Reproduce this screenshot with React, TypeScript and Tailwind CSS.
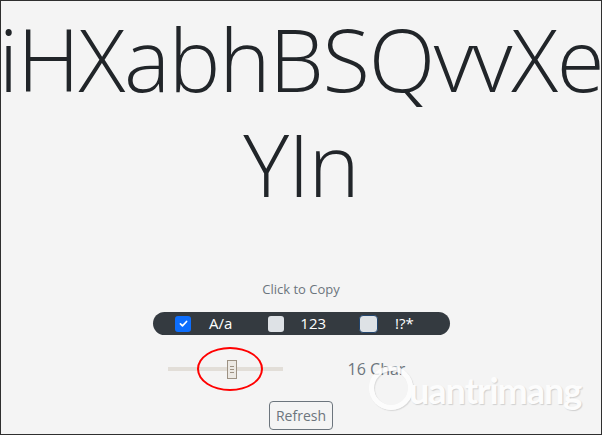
import React from "react"

const Check = () => (
    <svg viewBox="0 0 16 16" className="w-[11px] h-[11px]" fill="none">
        <path d="M3.5 8.5l3 3 6-6.5" stroke="white" strokeWidth="2.4" strokeLinecap="round" strokeLinejoin="round" />
    </svg>
)

export default function App() {
    return (
        <div className="w-[602px] h-[435px] bg-[#f4f4f4] border border-[#2f2f2f] overflow-hidden relative font-['Open_Sans',sans-serif]">
            <div className="flex flex-col items-center">
                <div className="w-full pt-[5px] text-[#212529] font-light text-[87px] leading-[105px] text-center whitespace-nowrap flex flex-col items-center">
                    <span className="tracking-[-1.3px]">iHXabhBSQvvXe</span>
                    <span className="tracking-[-1.3px]">YIn</span>
                </div>

                <p className="mt-[63px] text-[13px] leading-[20px] text-[#6c757d]">Click to Copy</p>

                <div className="mt-[13px] ml-[1px] w-[297px] h-[23px] rounded-full bg-[#343a40] flex items-center pl-[22px] text-white text-[15px]">
                    <span className="w-[16px] h-[16px] rounded-[3px] bg-[#0d6efd] flex items-center justify-center">
                        <Check />
                    </span>
                    <span className="ml-[18px] leading-none">A/a</span>
                    <span className="ml-[36px] w-[16px] h-[16px] rounded-[3px] bg-[#dee2e6]" />
                    <span className="ml-[16px] leading-none">123</span>
                    <span className="ml-[33px] w-[19px] h-[18px] rounded-[4px] bg-[#dee2e6] border border-[#23466f]" />
                    <span className="ml-[17px] leading-none">!?*</span>
                </div>

                <div className="mt-[19px] h-[30px] flex items-center">
                    <div className="relative w-[115px] h-[4px] bg-[#e2ded8] ml-[-29px]">
                        <span className="absolute left-[59px] top-[-7px] w-[10px] h-[19px] bg-[#ece9e4] border border-[#9d9284] flex flex-col items-center justify-center gap-[2px]">
                            <span className="w-[4px] h-px bg-[#9d9284]" />
                            <span className="w-[4px] h-px bg-[#9d9284]" />
                            <span className="w-[4px] h-px bg-[#9d9284]" />
                        </span>
                        <span className="absolute left-[29px] top-[-20px] w-[66px] h-[44px] rounded-[50%] border-2 border-[#ff0000]" />
                    </div>
                    <span className="ml-[65px] text-[16px] text-[#6c757d]">16 Char</span>
                </div>

                <button className="mt-[17px] w-[64px] h-[29px] border border-[#6c757d] rounded-[4px] text-[14px] text-[#6c757d] bg-transparent">
                    Refresh
                </button>
            </div>

            <div className="absolute left-[368px] top-[358px] flex items-center opacity-80">
                <span className="w-[44px] h-[44px] rounded-full border-[5px] border-white [box-shadow:1px_1px_1px_rgba(0,0,0,0.15),inset_1px_1px_1px_rgba(0,0,0,0.12)]" />
                <span className="ml-[-4px] mt-[4px] text-white text-[36px] font-bold tracking-[-1px] font-['Lato',sans-serif] [text-shadow:1px_1px_1px_rgba(0,0,0,0.18)]">
                    uantrimang
                </span>
            </div>
        </div>
    )
}
